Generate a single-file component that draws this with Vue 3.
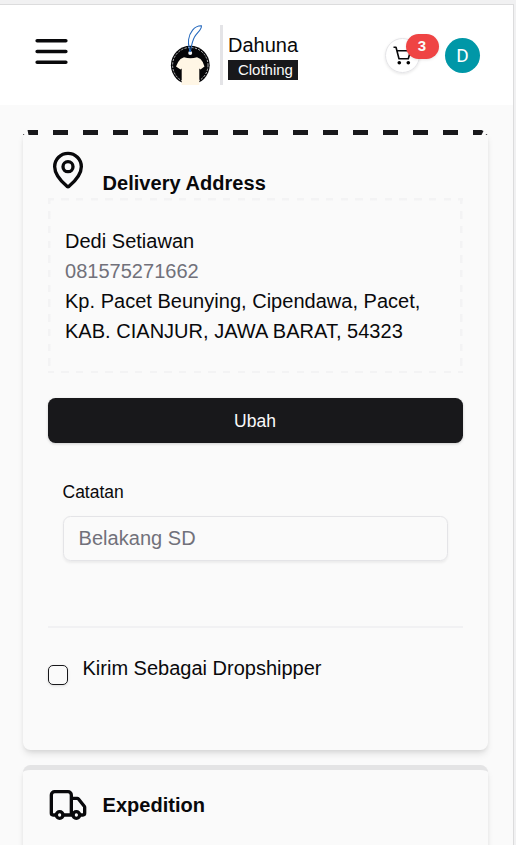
<script setup>
import { ref } from 'vue'

const cartCount = ref(3)
const note = ref('')
const dropship = ref(false)
const address = {
  name: 'Dedi Setiawan',
  phone: '081575271662',
  street: 'Kp. Pacet Beunying, Cipendawa, Pacet,',
  region: 'KAB. CIANJUR, JAWA BARAT, 54323',
}
</script>

<template>
  <div class="frame">
    <div class="screen">
      <header class="header">
        <button class="menu" aria-label="Menu">
          <svg viewBox="0 0 24 24" class="stroke"><path d="M4 6h16M4 12h16M4 18h16" /></svg>
        </button>
        <div class="brand">
          <svg class="logo" viewBox="0 0 42 62">
            <clipPath id="tag"><rect width="42" height="61" /></clipPath>
            <g clip-path="url(#tag)">
              <circle cx="20.300" cy="41.200" r="19.400" fill="#050507" />
              <circle cx="20.300" cy="41.200" r="17.700" fill="none" stroke="#e8e8e8" stroke-width="0.800" stroke-dasharray="2.200 1.300" />
              <path d="M14 33.300Q20.500 35.300 27 33.300L30.500 35Q33.500 38 34.500 42.500L30.500 45.500L29.300 44.500V61H11.700V44.500L10.500 45.500L6 42.500Q7.500 38 10.500 35Z" fill="#fff6e5" />
            </g>
            <circle cx="20.200" cy="29" r="2" fill="#f4f6f9" />
            <path d="M19.900 28C19.500 24 17.800 21 18.600 15.500C19.500 9 24 1.600 31.400 1.800C32 5.500 27 8.500 24.500 13C22 17.500 21.500 22 20.300 28" fill="none" stroke="#2468bd" stroke-width="1.050" />
          </svg>
          <div class="wordmark">
            <span class="brand-name">Dahuna</span>
            <span class="brand-tag">Clothing</span>
          </div>
        </div>
        <div class="actions">
          <button class="cart" aria-label="Cart">
            <svg viewBox="0 0 20 20">
              <path d="M.5 1.200H3L6 12.800H15.300L17.600 4.800H4" fill="none" stroke="#09090b" stroke-width="1.600" stroke-linejoin="round" />
              <circle cx="6.300" cy="16.800" r="1.800" />
              <circle cx="15.300" cy="16.800" r="1.800" />
            </svg>
            <span class="badge">{{ cartCount }}</span>
          </button>
          <div class="avatar">D</div>
        </div>
      </header>

      <main class="content">
        <section class="card delivery">
          <div class="title">
            <svg viewBox="0 0 24 24" class="stroke icon">
              <path d="M20 10c0 4.993-5.539 10.193-7.399 11.799a1 1 0 0 1-1.202 0C9.539 20.193 4 14.993 4 10a8 8 0 0 1 16 0" />
              <circle cx="12" cy="10" r="3" />
            </svg>
            <h2>Delivery Address</h2>
          </div>
          <div class="address">
            <p>{{ address.name }}</p>
            <p class="muted">{{ address.phone }}</p>
            <p>{{ address.street }}</p>
            <p>{{ address.region }}</p>
          </div>
          <button class="change">Ubah</button>
          <div class="field">
            <label for="note">Catatan</label>
            <input id="note" v-model="note" placeholder="Belakang SD" />
          </div>
          <hr />
          <label class="dropship">
            <input v-model="dropship" type="checkbox" />
            <span>Kirim Sebagai Dropshipper</span>
          </label>
        </section>

        <section class="card expedition">
          <div class="title">
            <svg viewBox="0 0 24 24" class="stroke icon">
              <path d="M14 18V6a2 2 0 0 0-2-2H4a2 2 0 0 0-2 2v11a1 1 0 0 0 1 1h2M15 18H9M19 18h2a1 1 0 0 0 1-1v-3.650a1 1 0 0 0-.220-.624l-3.480-4.350A1 1 0 0 0 17.520 8H14" />
              <circle cx="17" cy="18" r="2" />
              <circle cx="7" cy="18" r="2" />
            </svg>
            <h2>Expedition</h2>
          </div>
        </section>
      </main>
    </div>
  </div>
</template>

<style>
body { margin: 0; background: #f3f3f3; overflow: hidden; }
</style>

<style scoped>
* { box-sizing: border-box; }
.frame {
  height: 845px;
  padding: 4px 2px 0 0;
  overflow: hidden;
  background: #f1f1f2;
  color: #09090b;
  font: 20px/30px "Liberation Sans", Arial, sans-serif;
}
.screen {
  height: 841px;
  overflow: hidden;
  background: #fafafa;
  border-top: 1px solid #dcdcdd;
  border-right: 1px solid #dcdcdd;
}
button { padding: 0; border: 0; background: none; font: inherit; color: inherit; }
h2, p { margin: 0; font-size: 20px; line-height: 30px; }
h2 { letter-spacing: 0.040px; }
.stroke { fill: none; stroke: #09090b; stroke-width: 2; stroke-linecap: round; stroke-linejoin: round; }

.header {
  display: flex;
  align-items: center;
  justify-content: space-between;
  height: 100px;
  padding: 0 33px 0 30px;
  background: #fff;
}
.menu { width: 43px; height: 43px; margin-top: -7px; }
.menu svg { display: block; width: 43px; height: 43px; }
.brand { display: flex; height: 60px; margin-left: 10px; }
.logo { width: 42px; height: 62px; margin: -1px 8px 0 0; }
.wordmark {
  display: flex;
  flex-direction: column;
  align-items: flex-start;
  padding: 5px 0 0 5px;
  border-left: 3px solid #e4e4e7;
}
.brand-name { line-height: 30px; }
.brand-tag {
  width: 70px;
  height: 20px;
  padding-right: 5px;
  background: #18181b;
  color: #fafafa;
  font-size: 15px;
  line-height: 20px;
  text-align: right;
}
.actions { display: flex; align-items: center; gap: 25px; margin-top: 1px; }
.cart {
  position: relative;
  display: flex;
  width: 35px;
  height: 35px;
  padding: 7px 0 0 7px;
  border: 1px solid #e4e4e7;
  border-radius: 50%;
  box-shadow: 0 1px 3px rgba(0, 0, 0, 0.1);
}
.cart svg { width: 20px; height: 20px; }
.badge {
  position: absolute;
  top: -5px;
  left: 19.500px;
  width: 33px;
  height: 25px;
  border-radius: 13px;
  background: #ef4444;
  color: #fafafa;
  font-size: 15px;
  font-weight: 700;
  line-height: 24px;
  text-align: center;
  box-shadow: 0 1px 3px rgba(0, 0, 0, 0.1);
}
.avatar {
  width: 35px;
  height: 35px;
  border-radius: 50%;
  background: #0097a7;
  color: #fff;
  font: 400 19px/36px Roboto, sans-serif;
  text-align: center;
}

.content {
  display: flex;
  flex-direction: column;
  gap: 15px;
  padding: 25px 25.500px 0 22.500px;
}
.card {
  padding: 0 25px;
  border-radius: 7.500px;
  background: #fafafa;
  box-shadow: 0 5px 7.500px -1px rgba(0, 0, 0, 0.1), 0 2.500px 5px -2.500px rgba(0, 0, 0, 0.1);
}
.delivery { position: relative; height: 620px; padding-top: 20px; }
.delivery::before {
  content: "";
  position: absolute;
  inset: 0 0 auto;
  height: 5px;
  border-radius: 7.500px 7.500px 0 0;
  background: repeating-linear-gradient(90deg, #18181b 0 15px, transparent 15px 30px);
  clip-path: polygon(0 5px, 1px 4px, 2px 5px, 6px 5px, 5px 0, 459px 0, 461px 1px, 459px 5px, 463px 5px, 464px 4px, 465px 5px);
}
.title { display: flex; gap: 15px; }
.icon { width: 40px; height: 40px; flex: none; }
.delivery .title { height: 48px; }
.delivery h2 { padding-top: 18px; }
.address {
  height: 175px;
  padding: 28px 17.500px;
  --dash-x: repeating-linear-gradient(90deg, #f3f3f4 0 6px, transparent 6px 13.300px, #f3f3f4 13.300px 14.700px);
  --dash-y: repeating-linear-gradient(180deg, #f3f3f4 0 6px, transparent 6px 13.300px, #f3f3f4 13.300px 14.700px);
  background:
    var(--dash-x) top / 100% 2.500px no-repeat,
    var(--dash-x) bottom / 100% 2.500px no-repeat,
    var(--dash-y) left / 2.500px 100% no-repeat,
    var(--dash-y) right / 2.500px 100% no-repeat;
}
.address p { white-space: nowrap; letter-spacing: 0.020px; }
.muted { color: #71717a; }
.change {
  display: block;
  width: 100%;
  height: 45px;
  margin-top: 25px;
  border-radius: 7.500px;
  background: #18181b;
  color: #fafafa;
  font-size: 17.500px;
  line-height: 45px;
  padding-top: 1px;
  box-shadow: 0 1px 3px rgba(0, 0, 0, 0.18);
}
.field { display: flex; flex-direction: column; gap: 15px; padding: 40px 15px 0; }
.field label { font-size: 17.500px; line-height: 18px; }
.field input {
  width: 100%;
  height: 45px;
  padding: 0 15px;
  border: 1.250px solid #e4e4e7;
  border-radius: 7.500px;
  background: transparent;
  color: inherit;
  font: inherit;
  letter-spacing: 0.040px;
  box-shadow: 0 1.250px 2.500px rgba(0, 0, 0, 0.06);
}
.field input::placeholder { color: #71717a; opacity: 1; }
hr { height: 2px; margin: 65px 0 0; border: 0; background: #f1f1f3; }
.dropship { display: flex; gap: 15px; padding-top: 25px; }
.dropship input {
  flex: none;
  width: 20px;
  height: 20px;
  margin: 12px 0 0;
  appearance: none;
  border: 1px solid #18181b;
  border-radius: 5px;
  box-shadow: 0 1px 3px rgba(0, 0, 0, 0.12);
}
.expedition { height: 120px; padding-top: 15px; border-top: 5px solid #e4e4e5; }
.expedition .title { align-items: center; }
</style>
